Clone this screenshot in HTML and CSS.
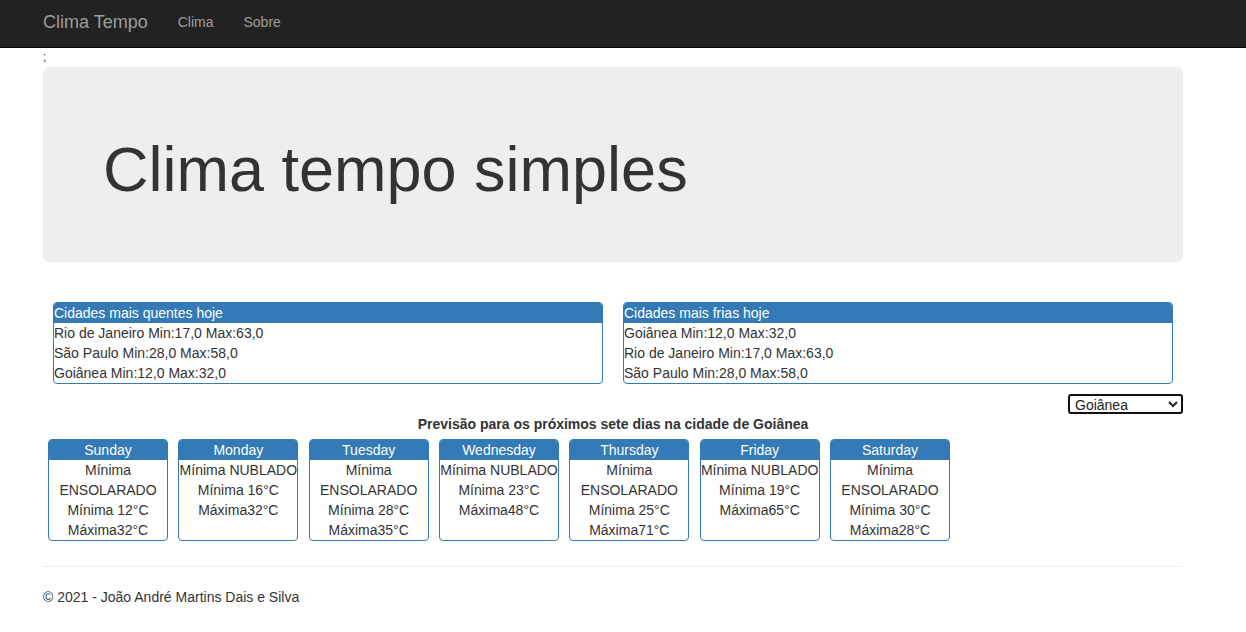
FILE: index.html
```html
<!DOCTYPE html>
<html lang="pt-br">
<head>
<meta charset="utf-8">
<title>Clima Tempo</title>
<link rel="stylesheet" href="styles.css">
</head>
<body>
<nav class="navbar">
  <div class="container nav-inner">
    <a class="brand" href="#">Clima Tempo</a>
    <a class="nav-link" href="#">Clima</a>
    <a class="nav-link" href="#">Sobre</a>
  </div>
</nav>
<div class="container">
  <div class="semi">;</div>
  <div class="jumbotron">
    <h1>Clima tempo simples</h1>
  </div>

  <div class="rank-row">
    <div class="panel">
      <div class="panel-head">Cidades mais quentes hoje</div>
      <div class="panel-line">Rio de Janeiro Min:17,0 Max:63,0</div>
      <div class="panel-line">São Paulo Min:28,0 Max:58,0</div>
      <div class="panel-line">Goiânea Min:12,0 Max:32,0</div>
    </div>
    <div class="panel">
      <div class="panel-head">Cidades mais frias hoje</div>
      <div class="panel-line">Goiânea Min:12,0 Max:32,0</div>
      <div class="panel-line">Rio de Janeiro Min:17,0 Max:63,0</div>
      <div class="panel-line">São Paulo Min:28,0 Max:58,0</div>
    </div>
  </div>

  <div class="select-row">
    <select class="city-select">
      <option>Goiânea</option>
      <option>Rio de Janeiro</option>
      <option>São Paulo</option>
    </select>
  </div>

  <div class="forecast-title">Previsão para os próximos sete dias na cidade de Goiânea</div>

  <div class="days">
    <div class="day">
      <div class="day-head">Sunday</div>
      <div>Mínima ENSOLARADO</div>
      <div>Mínima 12°C</div>
      <div>Máxima32°C</div>
    </div>
    <div class="day">
      <div class="day-head">Monday</div>
      <div>Mínima NUBLADO</div>
      <div>Mínima 16°C</div>
      <div>Máxima32°C</div>
    </div>
    <div class="day">
      <div class="day-head">Tuesday</div>
      <div>Mínima ENSOLARADO</div>
      <div>Mínima 28°C</div>
      <div>Máxima35°C</div>
    </div>
    <div class="day">
      <div class="day-head">Wednesday</div>
      <div>Mínima NUBLADO</div>
      <div>Mínima 23°C</div>
      <div>Máxima48°C</div>
    </div>
    <div class="day">
      <div class="day-head">Thursday</div>
      <div>Mínima ENSOLARADO</div>
      <div>Mínima 25°C</div>
      <div>Máxima71°C</div>
    </div>
    <div class="day">
      <div class="day-head">Friday</div>
      <div>Mínima NUBLADO</div>
      <div>Mínima 19°C</div>
      <div>Máxima65°C</div>
    </div>
    <div class="day">
      <div class="day-head">Saturday</div>
      <div>Mínima ENSOLARADO</div>
      <div>Mínima 30°C</div>
      <div>Máxima28°C</div>
    </div>
  </div>

  <hr class="divider">
  <footer class="footer">© 2021 - João André Martins Dais e Silva</footer>
</div>
</body>
</html>
```

FILE: styles.css
```css
* { box-sizing: border-box; }
html, body { margin: 0; padding: 0; }
body {
  font-family: "Liberation Sans", Arial, Helvetica, sans-serif;
  font-size: 14px;
  line-height: 20px;
  color: #333;
  background: #fff;
}
.container {
  width: 1140px;
  margin-left: 43px;
}
.navbar {
  background: #222;
  border-bottom: 1px solid #080808;
  height: 48px;
}
.nav-inner {
  display: flex;
  align-items: center;
  height: 44px;
}
.navbar a {
  color: #9d9d9d;
  text-decoration: none;
}
.brand {
  font-size: 18px;
  line-height: 20px;
  padding-right: 15px;
}
.nav-link {
  padding: 0 15px;
  line-height: 20px;
}
.semi {
  height: 19px;
  font-size: 12px;
  line-height: 18px;
}
.jumbotron {
  background: #eee;
  border-radius: 6px;
  padding: 48px 60px;
  height: 195px;
}
.jumbotron h1 {
  margin: 20px 0 10px;
  font-size: 63px;
  font-weight: 500;
  line-height: 69px;
  color: #333;
}
.rank-row {
  display: flex;
  margin-top: 40px;
}
.panel {
  width: 550px;
  margin: 0 10px;
  border: 1px solid #337ab7;
  border-radius: 4px;
  overflow: hidden;
}
.panel-head {
  background: #337ab7;
  color: #fff;
  height: 20px;
  line-height: 20px;
}
.panel-line {
  height: 20px;
}
.select-row {
  display: flex;
  justify-content: flex-end;
  margin-top: 10px;
}
.city-select {
  width: 115px;
  height: 20px;
  font-family: "Liberation Sans", Arial, sans-serif;
  font-size: 14px;
  border: 2px solid #111;
  border-radius: 3px;
  padding: 0 0 0 1px;
  color: #222;
  background: #fff;
}
.forecast-title {
  text-align: center;
  font-weight: bold;
  height: 20px;
}
.days {
  display: flex;
  align-items: stretch;
  gap: 10.33px;
  margin-top: 5px;
  padding-left: 5px;
}
.day {
  width: 120px;
  border: 1px solid #337ab7;
  border-radius: 4px;
  overflow: hidden;
  text-align: center;
  min-height: 102px;
}
.day-head {
  background: #337ab7;
  color: #fff;
}
.divider {
  margin: 25px 0 20px;
  border: 0;
  border-top: 1px solid #eee;
}
.footer {
  line-height: 20px;
}
```
